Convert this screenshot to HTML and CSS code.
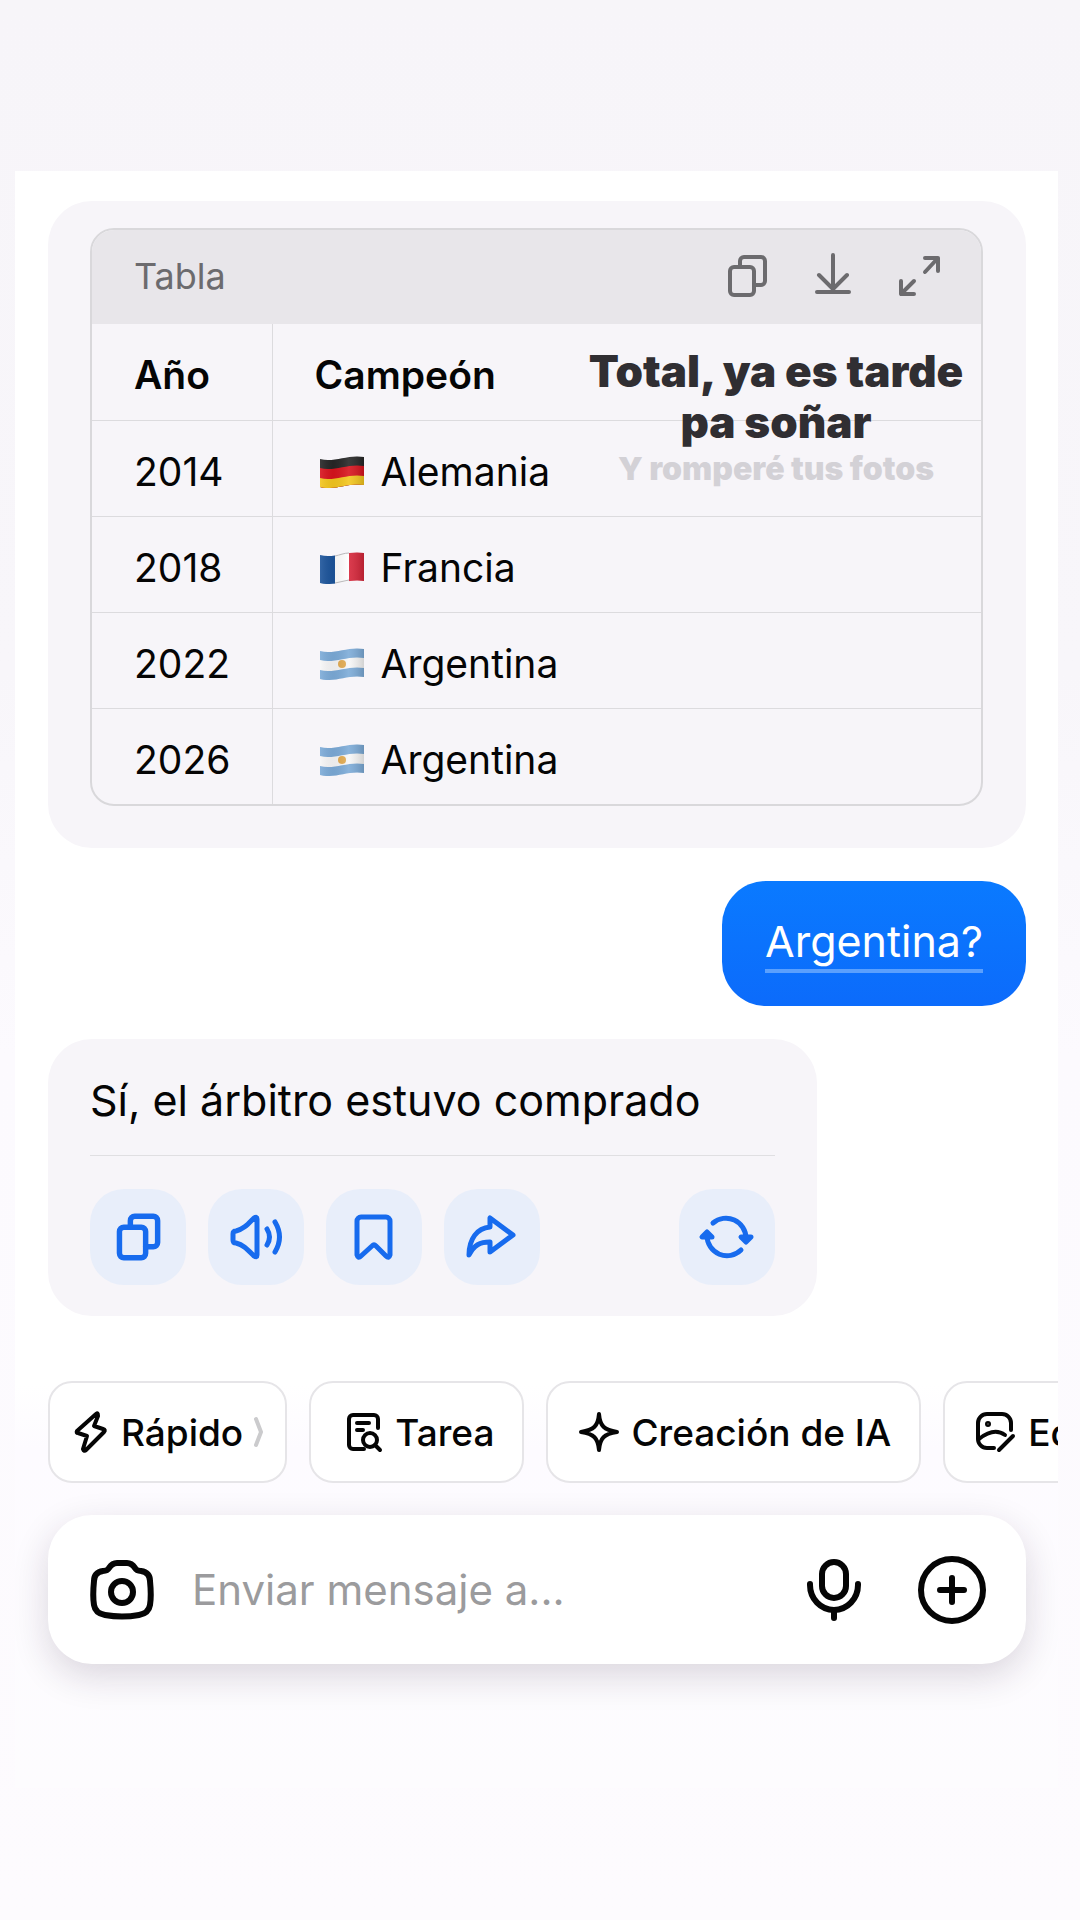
FILE: index.html
```html
<!DOCTYPE html>
<html lang="es">
<head>
  <meta charset="UTF-8">
  <meta name="viewport" content="width=device-width, initial-scale=1">
  <title>Chat</title>
  <link rel="stylesheet" href="styles.css">
</head>
<body>
  <!-- formas compartidas -->
  <svg class="defs" aria-hidden="true">
    <symbol id="icon-copy" viewBox="0 0 44 44">
      <rect x="5" y="13" width="24" height="28" rx="4"/>
      <path d="M15 13V7a4 4 0 0 1 4-4h17a4 4 0 0 1 4 4v20a4 4 0 0 1-4 4h-7"/>
    </symbol>
    <clipPath id="wave">
      <path d="M0 3C14 7 28-2 44 1V29C28 26 14 35 0 31z"/>
    </clipPath>
    <linearGradient id="fold">
      <stop offset="0" stop-color="#fff" stop-opacity="0.1"/>
      <stop offset="0.3" stop-color="#000" stop-opacity="0.05"/>
      <stop offset="0.65" stop-color="#fff" stop-opacity="0.1"/>
      <stop offset="1" stop-color="#000" stop-opacity="0.15"/>
    </linearGradient>
    <symbol id="flag-ar" viewBox="0 0 44 32">
      <g clip-path="url(#wave)">
        <path fill="#7cabd8" d="M0 0H44V32H0z"/>
        <path fill="#f7f7f7" d="M0 12C14 16 28 7 44 10V20C28 17 14 26 0 22z"/>
        <circle cx="22" cy="16" r="4" fill="#e3ac52"/>
        <path fill="url(#fold)" d="M0 0H44V32H0z"/>
      </g>
    </symbol>
  </svg>

  <main class="chat">
    <section class="message table-message">
      <div class="table-box">
        <div class="table-bar">
          <span>Tabla</span>
          <div class="table-tools">
            <button type="button" aria-label="Copiar tabla">
              <svg class="icon" width="44" height="44"><use href="#icon-copy"/></svg>
            </button>
            <button type="button" aria-label="Descargar">
              <svg class="icon" width="44" height="44" viewBox="0 0 44 44"><path d="M22 1v33M8 21l14 14 14-14M6 38h32"/></svg>
            </button>
            <button type="button" aria-label="Ampliar">
              <svg class="icon" width="44" height="44" viewBox="0 0 44 44"><path d="M28 4h13v13M41 4 28 18M4 27v13h13M4 40l13-13"/></svg>
            </button>
          </div>
        </div>
        <table>
          <thead>
            <tr><th scope="col">Año</th><th scope="col">Campeón</th></tr>
          </thead>
          <tbody>
            <tr>
              <td>2014</td>
              <td>
                <svg class="flag" viewBox="0 0 44 32" role="img" aria-label="Alemania">
                  <g clip-path="url(#wave)">
                    <path fill="#262626" d="M0 0H44V32H0z"/>
                    <path fill="#d8131d" d="M0 12C14 16 28 7 44 10V32H0z"/>
                    <path fill="#f3c61e" d="M0 22C14 26 28 17 44 20V32H0z"/>
                    <path fill="url(#fold)" d="M0 0H44V32H0z"/>
                  </g>
                </svg>Alemania
              </td>
            </tr>
            <tr>
              <td>2018</td>
              <td>
                <svg class="flag" viewBox="0 0 44 32" role="img" aria-label="Francia">
                  <g clip-path="url(#wave)">
                    <path fill="#1c549b" d="M0 0H15V32H0z"/>
                    <path fill="#fff" d="M15 0H29V32H15z"/>
                    <path fill="#d7263a" d="M29 0H44V32H29z"/>
                    <path fill="url(#fold)" d="M0 0H44V32H0z"/>
                  </g>
                  <path fill="none" stroke="#b9b8bb" d="M15 4C20 3 24 1 29 1M15 31C20 30 24 29 29 28"/>
                </svg>Francia
              </td>
            </tr>
            <tr>
              <td>2022</td>
              <td><svg class="flag" role="img" aria-label="Argentina"><use href="#flag-ar"/></svg>Argentina</td>
            </tr>
            <tr>
              <td>2026</td>
              <td><svg class="flag" role="img" aria-label="Argentina"><use href="#flag-ar"/></svg>Argentina</td>
            </tr>
          </tbody>
        </table>
      </div>

      <!-- letra de la canción -->
      <div class="lyrics">
        <p>Total, ya es tarde<br>pa soñar</p>
        <p class="next-line">Y romperé tus fotos</p>
      </div>
    </section>

    <section class="message user-message">
      <p>Argentina?</p>
    </section>

    <section class="message answer">
      <p>Sí, el árbitro estuvo comprado</p>
      <div class="actions">
        <button type="button" aria-label="Copiar">
          <svg class="icon" width="48" height="48"><use href="#icon-copy"/></svg>
        </button>
        <button type="button" aria-label="Escuchar">
          <svg class="icon" width="52" height="52" viewBox="0 0 52 52"><path d="M3 23q0-3 3-3C14 18 18 13 24 7q3-2 3 1v36q0 3-3 1C18 39 14 34 6 32q-3 0-3-3zM37 18q5 8 0 16M45 11q9 15 0 30"/></svg>
        </button>
        <button type="button" aria-label="Guardar">
          <svg class="icon" width="48" height="48" viewBox="0 0 48 48"><path d="M7 42V8a4 4 0 0 1 4-4h25a4 4 0 0 1 4 4v34q-1 4-4 1L26 33q-2-2-4 0L11 43q-3 3-4-1z"/></svg>
        </button>
        <button type="button" aria-label="Compartir">
          <svg class="icon" width="52" height="52" viewBox="0 0 52 52"><path d="M24 7v9C11 17 3 28 3 44 8 34 14 31 24 31v10L47 24z"/></svg>
        </button>
        <button type="button" aria-label="Regenerar">
          <svg class="icon" width="52" height="52" viewBox="0 0 52 52">
            <path d="M12 12A20 20 0 0 1 45 27M40 39A20 20 0 0 1 6 25"/>
            <path class="solid" d="M40 26h10l-5 5zM1 26h10l-5-5z"/>
          </svg>
        </button>
      </div>
    </section>

    <nav class="chips">
      <button type="button" class="quick">
        <svg class="icon" width="32" height="42" viewBox="0 0 32 42"><path d="M21 3 2 20q-1 2 1 2l9 3-4 13q1 3 3 1L29 21q2-2-1-3l-9-3 4-10q0-4-2-2z"/></svg>
        Rápido
        <svg class="icon chevron" width="12" height="32" viewBox="0 0 12 32"><path d="m3 3 5 13-5 13"/></svg>
      </button>
      <button type="button" class="task">
        <svg class="icon" width="36" height="40" viewBox="0 0 36 40"><path d="M31 16V7a4 4 0 0 0-4-4H6a4 4 0 0 0-4 4v26a4 4 0 0 0 4 4h11M10 11h12M10 18h6M28 33l5 5"/><circle cx="23" cy="28" r="7"/></svg>
        Tarea
      </button>
      <button type="button">
        <svg class="icon" width="40" height="40" viewBox="0 0 40 40"><path d="M20 2c1 12 5 16 18 18-13 2-17 6-18 18-1-12-5-16-18-18 13-2 17-6 18-18z"/></svg>
        Creación de IA
      </button>
      <button type="button">
        <svg class="icon" width="40" height="40" viewBox="0 0 40 40"><path d="M35 18V11a9 9 0 0 0-9-9H11a9 9 0 0 0-9 9v16a9 9 0 0 0 9 9h7M3 27q15-12 26-4M23 38l14-14"/><circle class="solid" cx="12" cy="12" r="1"/></svg>
        Editar
      </button>
    </nav>

    <form class="composer">
      <button type="button" aria-label="Cámara">
        <svg class="icon" width="64" height="60" viewBox="0 0 64 60"><path d="M27 3h10c4 0 6 2 8 5 1 2 3 3 6 3 6 1 9 4 9 10 1 10 1 18 0 24-1 6-5 9-11 10-11 2-23 2-34 0-6-1-10-4-11-10-1-6-1-14 0-24 0-6 3-9 9-10 3 0 5-1 6-3 2-3 4-5 8-5z"/><circle cx="32" cy="32" r="11"/></svg>
      </button>
      <input type="text" placeholder="Enviar mensaje a..." aria-label="Mensaje">
      <button type="button" aria-label="Dictar">
        <svg class="icon" width="54" height="62" viewBox="0 0 54 62"><rect x="15" y="3" width="24" height="36" rx="12"/><path d="M3 25v1a24 25 0 0 0 48 0v-1M27 52v7"/></svg>
      </button>
      <button type="button" aria-label="Añadir">
        <svg class="icon" width="68" height="68" viewBox="0 0 68 68"><circle cx="34" cy="34" r="31"/><path d="M34 22v24M22 34h24"/></svg>
      </button>
    </form>
  </main>
</body>
</html>
```
FILE: styles.css
```css
* {
  box-sizing: border-box;
}
body {
  margin: 0;
  min-height: 100vh;
  padding: 171px 22px 132px 15px;
  background: linear-gradient(#f7f5f9, #f8f6fa 35%, #fcfafe 55%, #fdfbfe);
  font-family: Inter, "Liberation Sans", sans-serif;
  color: #050505;
}
p {
  margin: 0;
}
button {
  padding: 0;
  border: none;
  background: none;
  font: inherit;
  color: inherit;
  cursor: pointer;
}
svg {
  display: block;
}
.defs {
  position: absolute;
  width: 0;
  height: 0;
}
.icon {
  flex: none;
  fill: none;
  stroke: currentColor;
  stroke-width: 4;
  stroke-linecap: round;
  stroke-linejoin: round;
  overflow: visible;
}
.icon .solid {
  fill: currentColor;
}
.chat {
  display: flex;
  flex-direction: column;
  padding: 30px 32px 124px 33px;
  overflow: hidden;
  background: linear-gradient(#fff 75%, #fdfbff 79%, #fdfcfe);
}
.message {
  border-radius: 44px;
  background: #f7f5f9;
  font-size: 43px;
  line-height: 56px;
}

/* tabla */
.table-message {
  position: relative;
  padding: 27px 43px 42px 42px;
  font-size: 39px;
  line-height: 48px;
}
.table-box {
  border: 2px solid #d9d8db;
  border-radius: 24px;
  overflow: hidden;
}
.table-bar {
  display: flex;
  justify-content: space-between;
  align-items: center;
  height: 94px;
  padding: 0 40px 2px 42px;
  background: #e8e6ea;
  color: #6c6b6e;
}
.table-bar > span {
  font-size: 36px;
}
.table-tools {
  display: flex;
  gap: 42px;
}
.actions .icon {
  stroke-width: 5;
}
table {
  width: 100%;
  border-collapse: collapse;
}
th,
td {
  height: 96px;
  padding: 7px 42px 0;
  border-top: 1px solid #dcdbde;
  text-align: left;
}
th {
  border-top: none;
  font-weight: 600;
}
th:first-child,
td:first-child {
  width: 180px;
  padding-right: 0;
  border-right: 1px solid #dcdbde;
}
.flag {
  display: inline-block;
  width: 44px;
  height: 32px;
  margin: 0 17px 0 5px;
  vertical-align: -2px;
}
.lyrics {
  position: absolute;
  top: 145px;
  right: 32px;
  width: 436px;
  text-align: center;
  font-size: 44px;
  font-weight: 900;
  line-height: 51px;
  color: #302e32;
}
.next-line {
  font-size: 32px;
  line-height: 42px;
  color: #d3d1d6;
}

/* mensajes */
.user-message {
  align-self: flex-end;
  margin-top: 33px;
  padding: 32px 43px 33px;
  background: linear-gradient(#0a7aff, #0c6bfb);
  color: #fff;
}
.user-message p {
  border-bottom: 4px solid #5ba0fd;
}
.answer {
  align-self: flex-start;
  min-width: 769px;
  margin-top: 33px;
  padding: 33px 42px 31px;
}
.answer p {
  padding-bottom: 27px;
  border-bottom: 1px solid #e0dfe2;
}
.actions {
  display: flex;
  gap: 22px;
  padding-top: 33px;
}
.actions button {
  display: flex;
  align-items: center;
  justify-content: center;
  width: 96px;
  height: 96px;
  border-radius: 34px;
  background: #e8eefa;
  color: #176bee;
}
.actions button:last-child {
  margin-left: auto;
}

/* accesos rápidos */
.chips {
  display: flex;
  gap: 22px;
  margin-top: 65px;
}
.chips button {
  display: flex;
  flex: none;
  align-items: center;
  gap: 12px;
  height: 102px;
  padding: 0 28px 0 31px;
  border: 2px solid #e6e5e8;
  border-radius: 24px;
  background: #fff;
  font-size: 37px;
  font-weight: 500;
}
.chips .quick {
  gap: 14px;
  padding: 0 20px 0 25px;
}
.chips .task {
  padding-left: 36px;
}
.chips .chevron {
  margin-left: -4px;
  color: #cbcbcd;
}

/* caja de texto */
.composer {
  display: flex;
  align-items: center;
  margin-top: 32px;
  height: 149px;
  padding: 0 40px 0 42px;
  border-radius: 44px;
  background: #fff;
  box-shadow: 0 12px 36px rgba(40, 20, 50, 0.16);
}
.composer .icon {
  stroke-width: 6;
}
.composer input {
  flex: 1;
  min-width: 0;
  padding: 0;
  margin: 0 40px 0 38px;
  border: none;
  outline: none;
  background: none;
  font: inherit;
  font-size: 42px;
}
.composer input::placeholder {
  color: #9b9b9d;
}
.composer button:last-child {
  margin-left: 57px;
}
```
